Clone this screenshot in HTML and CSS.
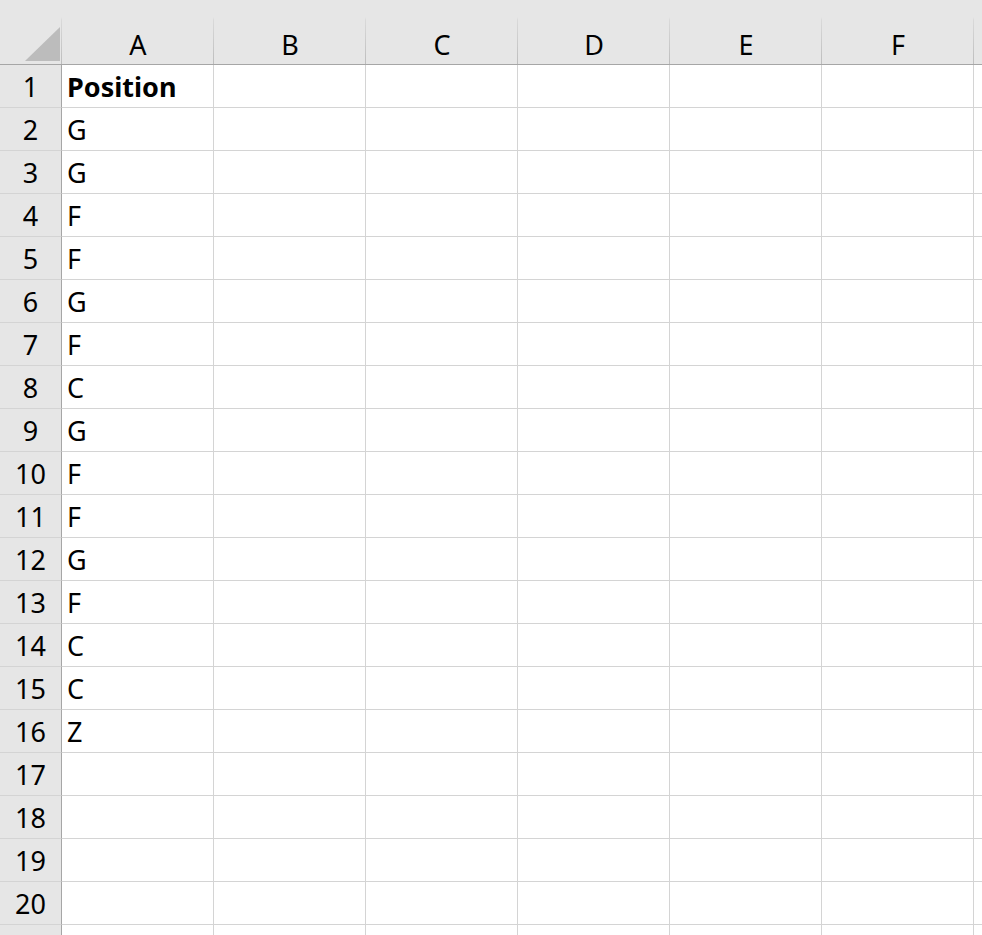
FILE: index.html
```html
<!DOCTYPE html>
<html>
<head>
    <title>Sheet1</title>
    <link rel="stylesheet" href="styles.css">
</head>
<body>
    <div class="sheet" id="sheet">
        <div class="corner"><span class="select-all"></span></div>
    </div>

    <script>
        // last column and last row are only partly on screen, so no labels
        const columns = ['A', 'B', 'C', 'D', 'E', 'F', ''];
        const rowCount = 21;
        const values = ['Position', 'G', 'G', 'F', 'F', 'G', 'F', 'C', 'G', 'F', 'F', 'G', 'F', 'C', 'C', 'Z'];
        const sheet = document.getElementById('sheet');

        // column headers
        columns.forEach(function (name) {
            const head = document.createElement('div');
            head.className = 'col-head';
            head.textContent = name;
            sheet.appendChild(head);
        });

        // rows: number + cells, only column A holds data
        for (let r = 1; r <= rowCount; r++) {
            const num = document.createElement('div');
            num.className = 'row-head';
            if (r < rowCount) num.textContent = r;
            sheet.appendChild(num);

            columns.forEach(function (name, c) {
                const cell = document.createElement('div');
                cell.className = 'cell';
                if (c === 0 && values[r - 1]) {
                    cell.textContent = values[r - 1];
                    if (r === 1) cell.classList.add('bold');
                }
                sheet.appendChild(cell);
            });
        }
    </script>
</body>
</html>
```

FILE: styles.css
```css
body {
    margin: 0;
    padding: 0;
    background-color: #ffffff;
    font-family: "Noto Sans", "Open Sans", sans-serif;
    color: #000000;
    overflow: hidden;
}

.sheet {
    display: grid;
    grid-template-columns: 62px repeat(7, 152px);
    grid-template-rows: 65px repeat(21, 43px);
    width: 100vw;
    height: 100vh;
    overflow: hidden;
}

.corner,
.col-head,
.row-head {
    background-color: #e6e6e6;
    box-sizing: border-box;
}

/* header separators: short line that fades in towards the bottom */
.corner,
.col-head {
    border-bottom: 1px solid #a6a6a6;
    background-image: linear-gradient(to bottom, #e6e6e6 0, #e6e6e6 17px, #d9d9d9 20px, #bdbdbd 64px);
    background-size: 1px 100%;
    background-position: right top;
    background-repeat: no-repeat;
}

.corner {
    position: relative;
}

/* little grey triangle in the top-left corner */
.select-all {
    position: absolute;
    right: 2px;
    bottom: 3px;
    width: 0;
    height: 0;
    border-left: 35px solid transparent;
    border-bottom: 34px solid #bcbcbc;
}

.col-head {
    font-size: 27px;
    text-align: center;
    line-height: 1;
    padding-top: 31px;
}

.row-head {
    font-size: 27px;
    text-align: center;
    line-height: 43px;
    border-right: 1px solid #a6a6a6;
    border-bottom: 1px solid #d4d4d4;
}

.cell {
    box-sizing: border-box;
    border-right: 1px solid #d4d4d4;
    border-bottom: 1px solid #d4d4d4;
    font-size: 27px;
    line-height: 43px;
    padding-left: 5px;
    white-space: nowrap;
    overflow: hidden;
}

.bold {
    font-weight: bold;
}
```
